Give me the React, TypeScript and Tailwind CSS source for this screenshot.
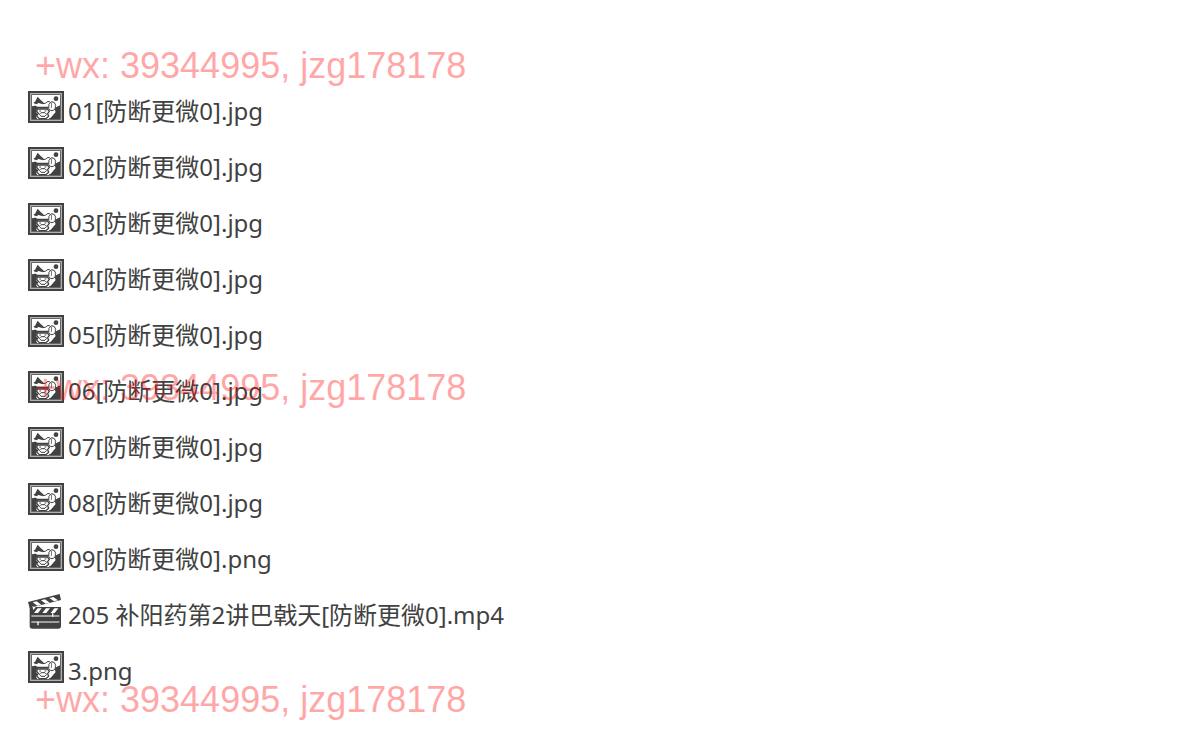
import React from 'react';

type FileItem = {
  name: string;
  type: 'image' | 'video';
};

const files: FileItem[] = [
  { name: '01[防断更微0].jpg', type: 'image' },
  { name: '02[防断更微0].jpg', type: 'image' },
  { name: '03[防断更微0].jpg', type: 'image' },
  { name: '04[防断更微0].jpg', type: 'image' },
  { name: '05[防断更微0].jpg', type: 'image' },
  { name: '06[防断更微0].jpg', type: 'image' },
  { name: '07[防断更微0].jpg', type: 'image' },
  { name: '08[防断更微0].jpg', type: 'image' },
  { name: '09[防断更微0].png', type: 'image' },
  { name: '205 补阳药第2讲巴戟天[防断更微0].mp4', type: 'video' },
  { name: '3.png', type: 'image' },
];

const ImageIcon: React.FC = () => (
  <svg viewBox="0 0 108 96" className="w-9 h-8" aria-hidden="true">
    <rect width="108" height="96" fill="#414141" />
    <rect x="8" y="8" width="92" height="80" fill="none" stroke="#b0b0b0" strokeWidth="4" />
    <rect x="12" y="12" width="84" height="72" fill="#fff" />
    <path d="M12 46l10-2 6 6-4 12 4 8-4 8 4 6H12z" fill="#414141" />
    <path d="M16 36l6-5 7-14 9 10 9 8-5 4-10-3-7 4z" fill="#414141" />
    <circle cx="84" cy="23" r="7" fill="#414141" />
    <path d="M42 38l10-1 8-6 6 2" fill="none" stroke="#414141" strokeWidth="3" />
    <path d="M20 46l8 4h34" fill="none" stroke="#414141" strokeWidth="5" />
    <path d="M96 43l-12 6-8 10 5 5-19 20h34z" fill="#414141" />
    <path d="M62 53q-2-16 8-21 12 0 13 11 0 10-6 15l-8 1z" fill="#fff" stroke="#414141" strokeWidth="3" />
    <path d="M71 35l-1 16" stroke="#777" strokeWidth="3" />
    <path d="M28 54h30l6 7-5 7 3 8-8 7H34l-8-8 5-8-5-6z" fill="#fff" stroke="#414141" strokeWidth="4" />
    <path d="M34 60h5M50 60h5M34 70l5-5h12l5 5-5 6H39z" fill="none" stroke="#414141" strokeWidth="3" />
    <path d="M66 67l14-11 3 7-15 17-6 2 4-8z" fill="#fff" />
  </svg>
);

const VideoIcon: React.FC = () => (
  <svg viewBox="0 0 102 105" className="w-[34px] h-[35px]" aria-hidden="true">
    <path d="M0 24L95 0l4 18L5 42z" fill="#414141" />
    <path d="M14 25l12-3 14 10-12 3zM39 19l12-3 14 10-12 3zM64 12l12-3 14 10-12 3z" fill="#fff" />
    <path d="M5 39h94v57q0 8-8 8H13q-8 0-8-8z" fill="#414141" />
    <path d="M13 37l10 3-7 8z" fill="#fff" />
    <path d="M29 43h12L30 57H18zM54 43h12L55 57H43zM79 43h12L80 57H68z" fill="#fff" />
    <path d="M10 66h84M10 84h84" stroke="#fff" strokeWidth="3" />
    <path d="M74 58v10M30 83v11" stroke="#fff" strokeWidth="4" />
  </svg>
);

const Watermark: React.FC<{ className: string }> = ({ className }) => (
  <p
    className={`absolute left-[35px] whitespace-nowrap font-['Liberation_Sans',Arial,sans-serif] text-4xl text-[#ff0000]/35 pointer-events-none ${className}`}
  >
    +wx: 39344995, jzg178178
  </p>
);

const App: React.FC = () => {
  return (
    <main className="relative min-h-screen bg-white pt-[83px] pb-8">
      <ul className="px-7 font-['Noto_Sans','Noto_Sans_CJK_SC',sans-serif] text-2xl text-[#414141]">
        {files.map((file) => (
          <li key={file.name} className="flex h-14 items-center">
            <span className="mb-2 w-10 shrink-0">
              {file.type === 'image' ? <ImageIcon /> : <VideoIcon />}
            </span>
            <span className="whitespace-nowrap">{file.name}</span>
          </li>
        ))}
      </ul>

      <Watermark className="top-[46px]" />
      <Watermark className="top-[368px]" />
      <Watermark className="top-[680px]" />
    </main>
  );
};

export default App;
